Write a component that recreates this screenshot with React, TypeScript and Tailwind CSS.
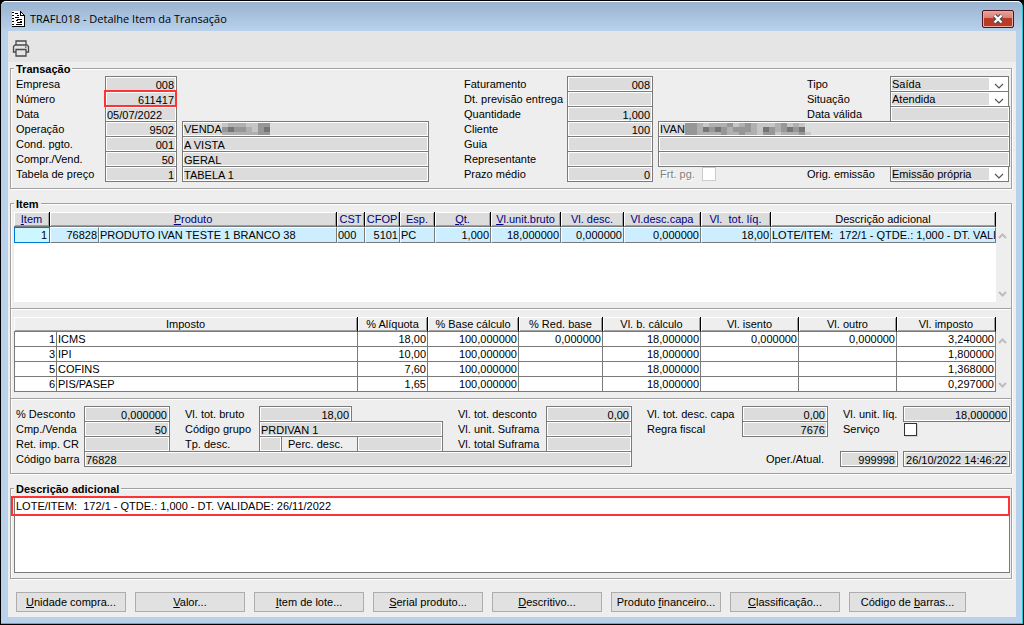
import { useState } from "react";
import type { ReactNode } from "react";
import { clsx } from "clsx";

const GROUP =
  "border border-[#a0a0a0] shadow-[1px_1px_0_#fff,inset_1px_1px_0_#fff]";
const FIELD =
  "block h-4 min-w-0 rounded-none border border-[#7a7a7a] bg-[#dcdcdc] pl-px pr-[2px] pt-px leading-[13px] shadow-[inset_0_0_0_1px_#fff] outline-none";

interface FieldProps {
  label: string;
  value?: string;
  right?: boolean;
  className?: string;
}

function Field({ label, value = "", right, className }: FieldProps) {
  return (
    <input
      readOnly
      aria-label={label}
      value={value}
      className={clsx(FIELD, right && "text-right", className ?? "w-full")}
    />
  );
}

function Label({ children, className }: { children: ReactNode; className?: string }) {
  return (
    <span className={clsx("whitespace-pre leading-[16px]", className)}>
      {children}
    </span>
  );
}

function Combo({ label, value }: { label: string; value: string }) {
  return (
    <div className="mr-px flex h-4 border border-[#7a7a7a] bg-white p-px">
      <select
        aria-label={label}
        defaultValue={value}
        className="min-w-0 flex-1 appearance-none rounded-none bg-[#dcdcdc] leading-[12px] outline-none"
      >
        <option>{value}</option>
      </select>
      <svg width="18" height="12" viewBox="0 0 18 12" className="shrink-0">
        <path d="M6 6l4 4 4-4" fill="none" stroke="#555" strokeWidth="1.2" />
      </svg>
    </div>
  );
}

// Censored part of a name: a strip of grey blocks, three rows high.
function Mosaic({ shades }: { shades: string[] }) {
  const palette = ["#dcdcdc", "#c6c6c6", "#b0b0b0", "#979797", "#757575"];
  const cols = shades[0].length;
  return (
    <svg
      width={cols * 6}
      height="12"
      viewBox={`0 0 ${cols * 6} 12`}
      shapeRendering="crispEdges"
      className="shrink-0"
      aria-hidden="true"
    >
      {shades.map((row, y) =>
        row.split("").map((c, x) => (
          <rect
            key={`${x}-${y}`}
            x={x * 6}
            y={[0, 4, 9][y]}
            width="6"
            height={[4, 5, 3][y]}
            fill={palette[Number(c)]}
          />
        )),
      )}
    </svg>
  );
}

function CensoredField({ label, text, shades }: { label: string; text: string; shades: string[] }) {
  return (
    <div className={clsx(FIELD, "flex")} role="textbox" aria-label={label} aria-readonly="true">
      <span>{text}</span>
      <Mosaic shades={shades} />
    </div>
  );
}

interface Column {
  title: string;
  hot?: boolean;
  sortable?: boolean;
  span?: number;
}

function HeadCell({ col }: { col: Column }) {
  return (
    <th
      colSpan={col.span ?? 1}
      className={clsx(
        "h-[15px] overflow-hidden whitespace-pre border-b border-r border-b-[#7a7a7a] border-r-black p-0 text-center font-normal leading-[14px] shadow-[inset_1px_1px_0_#fff,inset_-1px_-1px_0_#a0a0a0]",
        col.sortable ? "bg-[#dcdcdc] text-[#00007f]" : "bg-[#eeeeee]",
      )}
    >
      {col.hot ? (
        <>
          <span className="underline">{col.title[0]}</span>
          {col.title.slice(1)}
        </>
      ) : (
        col.title
      )}
    </th>
  );
}

function ScrollArrows({ className }: { className: string }) {
  return (
    <div className={clsx("flex w-[15px] shrink-0 flex-col items-center justify-between pr-[3px]", className)}>
      <button type="button" aria-label="Rolar para cima">
        <svg width="9" height="6" viewBox="0 0 9 6" className="block">
          <path d="M1 5l3.500-3.500L8 5" fill="none" stroke="#bdbdbd" strokeWidth="2" />
        </svg>
      </button>
      <button type="button" aria-label="Rolar para baixo">
        <svg width="9" height="6" viewBox="0 0 9 6" className="block">
          <path d="M1 1l3.500 3.500L8 1" fill="none" stroke="#bdbdbd" strokeWidth="2" />
        </svg>
      </button>
    </div>
  );
}

function TitleBar() {
  return (
    <header className="flex h-[29px] items-center bg-linear-to-b from-[#99b4d1] to-[#b9d1ea] pl-1 pr-[2px] pt-[5px]">
      <svg width="13" height="16" viewBox="0 0 13 16" shapeRendering="crispEdges">
        <path d="M0 0h9v1h1v1h1v1h1v1h1v12H0z" fill="#000" />
        <path d="M0 0h8v5h4v10H0z" fill="#fff" />
        <path d="M9 2h1v1h1v1H9z" fill="#fff" />
        <path
          d="M0 1h2v1H0zM0 4h2v1H0zM0 7h2v1H0zM0 10h2v1H0zM0 13h2v1H0zM3 2h3v1H3zM5 4h2v1H5zM3 6h4v1H3zM5 8h5v1H5zM4 9h2v1H4zM5 11h5v1H5zM8 10h2v1H8zM4 13h6v1H4z"
          fill="#000"
        />
      </svg>
      <h1 className="ml-[5px] flex-1 font-['Open_Sans','Noto_Sans',sans-serif] text-[11px] leading-[18px]">
        TRAFL018 - Detalhe Item da Transação
      </h1>
      <button
        type="button"
        aria-label="Fechar"
        className="flex h-[18px] w-8 items-center justify-center rounded-[2px] border border-[#4a1420] bg-linear-to-b from-[#e8a197] from-0% via-[#d98076] via-45% to-[#c9543c] shadow-[inset_0_0_0_1px_#e6aaa0,inset_0_-9px_0_#b93a25]"
      >
        <svg width="12" height="10" viewBox="0 0 12 10">
          <path d="M2.500 1.500l7 7M9.500 1.500l-7 7" stroke="#4a4c5c" strokeWidth="4.500" />
          <path d="M2.500 1.500l7 7M9.500 1.500l-7 7" stroke="#fff" strokeWidth="2.400" />
        </svg>
      </button>
    </header>
  );
}

function Toolbar() {
  return (
    <div className="flex h-[31px] items-center bg-[#e5e5e5] pl-1 pt-[3px]">
      <button type="button" aria-label="Imprimir">
        <svg
          width="18"
          height="17"
          viewBox="0 0 18 17"
          fill="none"
          stroke="#4a4a4a"
          strokeWidth="1.300"
          className="block"
        >
          <path d="M4 5V1h10v4" />
          <path d="M4 12H1.500V6.500L3 5h12l1.500 1.500V12H14" />
          <path d="M4 9.500h10V16H4z" />
          <path d="M13 7.200h1.500" />
        </svg>
      </button>
    </div>
  );
}

function Legend({ children }: { children: ReactNode }) {
  return (
    <h2 className="-mt-[7px] ml-[3px] w-fit bg-[#eeeeee] px-[2px] font-bold leading-[14px]">
      {children}
    </h2>
  );
}

function TransactionGroup() {
  return (
    <section className={clsx("h-[121px]", GROUP)}>
      <Legend>Transação</Legend>
      <div className="ml-[5px] mr-px grid auto-rows-[15px] grid-cols-[89px_72px_5px_minmax(0,247fr)_35px_103px_86px_5px_minmax(0,149fr)_83px_120px]">
        <Label>Empresa</Label>
        <Field label="Empresa" value="008" right />
        <Label className="col-start-6">Faturamento</Label>
        <Field label="Faturamento" value="008" right />
        <Label className="col-start-10">Tipo</Label>
        <Combo label="Tipo" value="Saída" />

        <Label className="col-start-1">Número</Label>
        <div className="relative">
          <Field label="Número" value="611417" right />
          <div className="pointer-events-none absolute -left-px -top-px right-0 h-[17px] border-2 border-[#ff3333]" />
        </div>
        <Label className="col-start-6">Dt. previsão entrega</Label>
        <Field label="Dt. previsão entrega" />
        <Label className="col-start-10">Situação</Label>
        <Combo label="Situação" value="Atendida" />

        <Label className="col-start-1">Data</Label>
        <Field label="Data" value="05/07/2022" />
        <Label className="col-start-6">Quantidade</Label>
        <Field label="Quantidade" value="1,000" right />
        <Label className="col-start-10">Data válida</Label>
        <Field label="Data válida" />

        <Label className="col-start-1">Operação</Label>
        <Field label="Operação" value="9502" right />
        <div className="col-start-4">
          <CensoredField
            label="Descrição da operação"
            text="VENDA"
            shades={["12221133", "34332134", "22222233"]}
          />
        </div>
        <Label className="col-start-6">Cliente</Label>
        <Field label="Cliente" value="100" right />
        <div className="col-span-3 col-start-9">
          <CensoredField
            label="Nome do cliente"
            text="IVAN "
            shades={["332122231232111231210", "332434323332143234340", "332222322322133122231"]}
          />
        </div>

        <Label className="col-start-1">Cond. pgto.</Label>
        <Field label="Cond. pgto." value="001" right />
        <Field label="Descrição da condição" value="A VISTA" className="col-start-4" />
        <Label className="col-start-6">Guia</Label>
        <Field label="Guia" />
        <Field label="Nome do guia" className="col-span-3 col-start-9" />

        <Label className="col-start-1">Compr./Vend.</Label>
        <Field label="Compr./Vend." value="50" right />
        <Field label="Nome do vendedor" value="GERAL" className="col-start-4" />
        <Label className="col-start-6">Representante</Label>
        <Field label="Representante" />
        <Field label="Nome do representante" className="col-span-3 col-start-9" />

        <Label className="col-start-1">Tabela de preço</Label>
        <Field label="Tabela de preço" value="1" right />
        <Field label="Descrição da tabela" value="TABELA 1" className="col-start-4" />
        <Label className="col-start-6">Prazo médio</Label>
        <Field label="Prazo médio" value="0" right />
        <label className="col-start-9 flex h-4 pl-[2px] leading-[16px] text-[#808080] [text-shadow:1px_1px_0_#fff]">
          Frt. pg.
          <input
            type="checkbox"
            disabled
            className="ml-[7px] mt-px h-[14px] w-[14px] appearance-none border border-[#cccccc] bg-white"
          />
        </label>
        <Label className="col-start-10">Orig. emissão</Label>
        <Combo label="Orig. emissão" value="Emissão própria" />
      </div>
    </section>
  );
}

const ITEM_COLUMNS: Column[] = [
  { title: "Item", hot: true, sortable: true },
  { title: "Produto", hot: true, sortable: true, span: 2 },
  { title: "CST", sortable: true },
  { title: "CFOP", sortable: true },
  { title: "Esp.", sortable: true },
  { title: "Qt.", hot: true, sortable: true },
  { title: "Vl.unit.bruto", hot: true, sortable: true },
  { title: "Vl. desc.", sortable: true },
  { title: "Vl.desc.capa", sortable: true },
  { title: "Vl.  tot. líq.", sortable: true },
  { title: "Descrição adicional" },
];

const ITEM_ROW: { text: string; left?: boolean }[] = [
  { text: "1" },
  { text: "76828" },
  { text: "PRODUTO IVAN TESTE 1 BRANCO 38", left: true },
  { text: "000", left: true },
  { text: "5101" },
  { text: "PC", left: true },
  { text: "1,000" },
  { text: "18,000000" },
  { text: "0,000000" },
  { text: "0,000000" },
  { text: "18,00" },
  { text: "LOTE/ITEM:  172/1 - QTDE.: 1,000 - DT. VALIDADE: 26/11/2022", left: true },
];

function ItemTable() {
  return (
    <div className="ml-[3px] mt-px flex h-[90px]">
      <div className="min-w-0 flex-1 bg-white">
        <table className="w-full table-fixed border-separate border-spacing-0">
          <colgroup>
            <col className="w-9" />
            <col className="w-[49px]" />
            <col />
            <col className="w-7" />
            <col className="w-[35px]" />
            <col className="w-[35px]" />
            <col className="w-14" />
            <col className="w-[70px]" />
            <col className="w-[63px]" />
            <col className="w-[77px]" />
            <col className="w-[70px]" />
            <col className="w-[225px]" />
          </colgroup>
          <thead>
            <tr>
              {ITEM_COLUMNS.map((c) => (
                <HeadCell key={c.title} col={c} />
              ))}
            </tr>
          </thead>
          <tbody>
            <tr>
              {ITEM_ROW.map((c, i) => (
                <td
                  key={i}
                  className={clsx(
                    "h-4 overflow-hidden whitespace-pre border py-0 leading-[14px]",
                    c.left ? "text-left" : "text-right",
                    i === 0
                      ? "border-[#0078d7] bg-[#ccf7ff] pr-[2px]"
                      : "border-b-[#7a7a7a] border-l-white border-r-[#7a7a7a] border-t-white bg-[#cceeff] pr-px",
                  )}
                >
                  {c.text}
                </td>
              ))}
            </tr>
          </tbody>
        </table>
      </div>
      <ScrollArrows className="pb-[5px] pt-[21px]" />
    </div>
  );
}

const TAX_COLUMNS: Column[] = [
  { title: "Imposto", span: 2 },
  { title: "% Alíquota" },
  { title: "% Base cálculo" },
  { title: "% Red. base" },
  { title: "Vl. b. cálculo" },
  { title: "Vl. isento" },
  { title: "Vl. outro" },
  { title: "Vl. imposto" },
];

const TAX_ROWS = [
  ["1", "ICMS", "18,00", "100,000000", "0,000000", "18,000000", "0,000000", "0,000000", "3,240000"],
  ["3", "IPI", "10,00", "100,000000", "", "18,000000", "", "", "1,800000"],
  ["5", "COFINS", "7,60", "100,000000", "", "18,000000", "", "", "1,368000"],
  ["6", "PIS/PASEP", "1,65", "100,000000", "", "18,000000", "", "", "0,297000"],
];

function TaxTable() {
  return (
    <div className="ml-[3px] mt-[7px] flex h-[76px]">
      <div className="min-w-0 flex-1">
        <table className="w-full table-fixed border-separate border-spacing-0">
          <colgroup>
            <col className="w-[43px]" />
            <col />
            <col className="w-[70px]" />
            <col className="w-[91px]" />
            <col className="w-[84px]" />
            <col className="w-[98px]" />
            <col className="w-[98px]" />
            <col className="w-[98px]" />
            <col className="w-[99px]" />
          </colgroup>
          <thead>
            <tr>
              {TAX_COLUMNS.map((c) => (
                <HeadCell key={c.title} col={c} />
              ))}
            </tr>
          </thead>
          <tbody>
            {TAX_ROWS.map((row) => (
              <tr key={row[1]}>
                {row.map((text, i) => (
                  <td
                    key={i}
                    className={clsx(
                      "h-[15px] border-b border-r border-[#7a7a7a] bg-white pb-0 pt-px leading-[13px]",
                      i === 0 && "border-l",
                      i === 1 ? "pl-px text-left" : "pr-px text-right",
                    )}
                  >
                    {text}
                  </td>
                ))}
              </tr>
            ))}
          </tbody>
        </table>
      </div>
      <ScrollArrows className="pb-[5px] pt-[21px]" />
    </div>
  );
}

function ItemDetails() {
  return (
    <div className="ml-[5px] mr-px mt-[6px] grid auto-rows-[15px] grid-cols-[68px_86px_15px_74px_minmax(0,1fr)_15px_88px_86px_15px_95px_86px_15px_60px_107px]">
      <Label>% Desconto</Label>
      <Field label="% Desconto" value="0,000000" right />
      <Label className="col-start-4">Vl. tot. bruto</Label>
      <Field label="Vl. tot. bruto" value="18,00" right className="w-[93px]" />
      <Label className="col-start-7">Vl. tot. desconto</Label>
      <Field label="Vl. tot. desconto" value="0,00" right />
      <Label className="col-start-10">Vl. tot. desc. capa</Label>
      <Field label="Vl. tot. desc. capa" value="0,00" right />
      <Label className="col-start-13">Vl. unit. líq.</Label>
      <Field label="Vl. unit. líq." value="18,000000" right />

      <Label className="col-start-1">Cmp./Venda</Label>
      <Field label="Cmp./Venda" value="50" right />
      <Label className="col-start-4">Código grupo</Label>
      <Field label="Código grupo" value="PRDIVAN 1" />
      <Label className="col-start-7">Vl. unit. Suframa</Label>
      <Field label="Vl. unit. Suframa" />
      <Label className="col-start-10">Regra fiscal</Label>
      <Field label="Regra fiscal" value="7676" right />
      <label htmlFor="servico" className="col-start-13 leading-[16px]">
        Serviço
      </label>
      <input
        id="servico"
        type="checkbox"
        className="ml-px mt-[2px] h-[13px] w-[13px] appearance-none border border-[#333] bg-white shadow-[1px_1px_0_#d4d4d4] checked:bg-[#333]"
      />

      <Label className="col-start-1">Ret. imp. CR</Label>
      <Field label="Ret. imp. CR" />
      <Label className="col-start-4">Tp. desc.</Label>
      <div className="flex">
        <Field label="Tp. desc." className="w-[23px]" />
        <span className="h-4 w-[75px] shrink-0 border-t border-[#7a7a7a] pl-[6px] leading-[15px]">
          Perc. desc.
        </span>
        <Field label="Perc. desc." className="flex-1" />
      </div>
      <Label className="col-start-7">Vl. total Suframa</Label>
      <Field label="Vl. total Suframa" />

      <Label className="col-start-1">Código barra</Label>
      <Field label="Código barra" value="76828" className="col-span-7 col-start-2" />
      <div className="col-span-4 col-start-10 flex justify-end pr-[5px]">
        <Label className="mr-4">Oper./Atual.</Label>
        <Field label="Operador" value="999998" right className="w-[58px]" />
      </div>
      <Field label="Data de atualização" value="26/10/2022 14:46:22" right />
    </div>
  );
}

function ItemGroup() {
  return (
    <section className={clsx("mt-[14px]", GROUP)}>
      <Legend>Item</Legend>
      <ItemTable />
      <div className="mt-[6px] border-b border-t border-b-white border-t-[#a0a0a0]" />
      <TaxTable />
      <div className="mt-[5px] border-b border-t border-b-white border-t-[#a0a0a0]" />
      <ItemDetails />
      <div className="h-[7px]" />
    </section>
  );
}

function DescriptionGroup() {
  const [text, setText] = useState(
    "LOTE/ITEM:  172/1 - QTDE.: 1,000 - DT. VALIDADE: 26/11/2022",
  );
  return (
    <section className={clsx("mt-[14px]", GROUP)}>
      <Legend>Descrição adicional</Legend>
      <div className="relative mb-[5px] ml-[3px] mr-px">
        <textarea
          aria-label="Descrição adicional"
          value={text}
          onChange={(e) => setText(e.target.value)}
          className="block h-[77px] w-full resize-none rounded-none border border-[#7a7a7a] bg-white px-px pt-[2px] leading-[14px] outline-none"
        />
        <div className="pointer-events-none absolute -left-[3px] right-0 top-0 h-5 border-2 border-[#ff3333]" />
      </div>
    </section>
  );
}

const ACTIONS: { before?: string; key: string; after: string; wide?: boolean }[] = [
  { key: "U", after: "nidade compra..." },
  { key: "V", after: "alor..." },
  { key: "I", after: "tem de lote..." },
  { key: "S", after: "erial produto..." },
  { key: "D", after: "escritivo..." },
  { before: "Produto ", key: "f", after: "inanceiro..." },
  { key: "C", after: "lassificação..." },
  { before: "Código de ", key: "b", after: "arras...", wide: true },
];

function ActionBar() {
  return (
    <div className="mt-[13px] flex flex-wrap gap-[9px] pb-[5px] pl-[6px]">
      {ACTIONS.map((a) => (
        <button
          key={a.key}
          type="button"
          className={clsx(
            "h-5 whitespace-pre border border-[#adadad] bg-[#e1e1e1] hover:bg-[#e5f1fb]",
            a.wide ? "w-[117px]" : "w-[110px]",
          )}
        >
          {a.before}
          <span className="underline">{a.key}</span>
          {a.after}
        </button>
      ))}
    </div>
  );
}

export default function App() {
  return (
    <div className="min-h-screen bg-black p-px font-['Liberation_Sans',Arial,sans-serif] text-[11px] text-black">
      <div className="rounded-t-[6px] border-b border-r border-[#27c7d8] bg-[#b9d1ea]">
        <div className="overflow-hidden rounded-t-[5px] border-t border-white bg-linear-to-b from-[#99b4d1] to-[#b9d1ea] to-[30px] pb-[6px] pl-[7px] pr-[6px]">
          <TitleBar />
          <main className="bg-[#eeeeee]">
            <Toolbar />
            <div className="pl-[2px] pr-1 pt-[6px]">
              <TransactionGroup />
              <ItemGroup />
              <DescriptionGroup />
              <ActionBar />
            </div>
          </main>
        </div>
      </div>
    </div>
  );
}
